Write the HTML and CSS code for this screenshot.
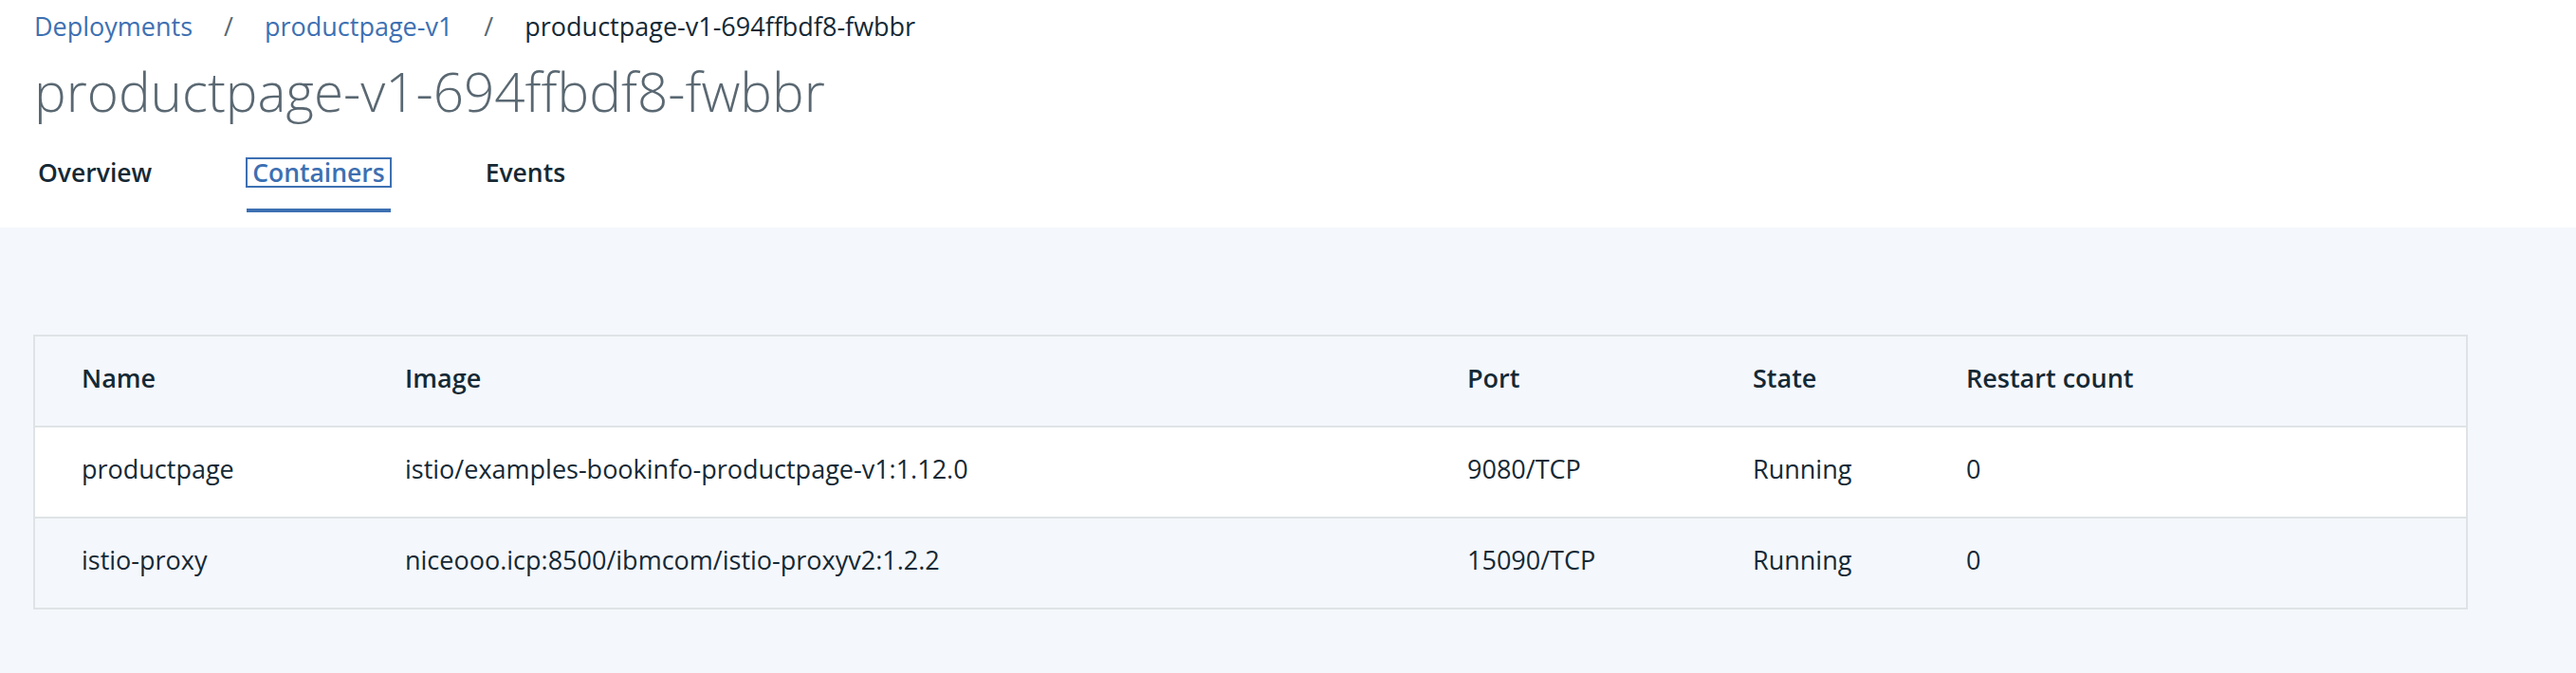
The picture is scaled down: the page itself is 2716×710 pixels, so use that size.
FILE: index.html
```html
<!DOCTYPE html>
<html lang="en">
<head>
<meta charset="utf-8">
<title>productpage-v1-694ffbdf8-fwbbr</title>
<link rel="stylesheet" href="styles.css">
</head>
<body>
<header class="page-header">
  <nav class="breadcrumb">
    <a class="crumb-link" href="#">Deployments</a>
    <span class="crumb-sep">/</span>
    <a class="crumb-link" href="#">productpage-v1</a>
    <span class="crumb-sep">/</span>
    <span class="crumb-current">productpage-v1-694ffbdf8-fwbbr</span>
  </nav>
  <h1 class="page-title">productpage-v1-694ffbdf8-fwbbr</h1>
  <ul class="tabs">
    <li class="tab"><a class="tab-link" href="#">Overview</a></li>
    <li class="tab tab-selected"><a class="tab-link tab-focus" href="#">Containers</a></li>
    <li class="tab"><a class="tab-link" href="#">Events</a></li>
  </ul>
</header>
<main class="content">
  <table class="data-table">
    <colgroup>
      <col class="col-name">
      <col class="col-image">
      <col class="col-port">
      <col class="col-state">
      <col class="col-restart">
    </colgroup>
    <thead>
      <tr class="head-row">
        <th>Name</th>
        <th>Image</th>
        <th>Port</th>
        <th>State</th>
        <th>Restart count</th>
      </tr>
    </thead>
    <tbody>
      <tr class="row-white">
        <td>productpage</td>
        <td>istio/examples-bookinfo-productpage-v1:1.12.0</td>
        <td>9080/TCP</td>
        <td>Running</td>
        <td>0</td>
      </tr>
      <tr class="row-gray">
        <td>istio-proxy</td>
        <td>niceooo.icp:8500/ibmcom/istio-proxyv2:1.2.2</td>
        <td>15090/TCP</td>
        <td>Running</td>
        <td>0</td>
      </tr>
    </tbody>
  </table>
</main>
</body>
</html>
```
FILE: styles.css
```css
html, body {
  margin: 0;
  padding: 0;
}
body {
  background: #f4f7fb;
  font-family: "Open Sans", "Noto Sans", sans-serif;
  color: #152935;
  width: 2716px;
  height: 710px;
  overflow: hidden;
}
.page-header {
  background: #ffffff;
  height: 240px;
  box-sizing: border-box;
  padding: 10px 0 0 36px;
}
.breadcrumb {
  display: flex;
  align-items: baseline;
  gap: 33px;
  font-size: 27px;
  line-height: 36px;
}
.crumb-link {
  color: #3d70b2;
  text-decoration: none;
}
.crumb-sep {
  color: #5a6872;
}
.crumb-current {
  color: #152935;
}
.page-title {
  margin: 19px 0 0 0;
  font-size: 56.6px;
  font-weight: 300;
  line-height: 64px;
  color: #5a6872;
  letter-spacing: 0;
}
.tabs {
  list-style: none;
  margin: 37px 0 0 -3px;
  padding: 0;
  display: flex;
}
.tab {
  position: relative;
  margin-right: 92px;
  padding-bottom: 26px;
}
.tab-link {
  display: block;
  padding: 0 5px;
  border: 2px solid transparent;
  font-size: 26.5px;
  font-weight: 600;
  line-height: 28px;
  color: #152935;
  text-decoration: none;
}
.tab-selected .tab-link {
  color: #3d70b2;
}
.tab-focus {
  border-color: #3d70b2;
}
.tab-selected::after {
  content: "";
  position: absolute;
  left: 1px;
  right: 1px;
  bottom: 0;
  height: 4px;
  background: #3d70b2;
}
.content {
  padding: 113px 114px 0 35px;
}
.data-table {
  width: 100%;
  border-collapse: collapse;
  table-layout: fixed;
  border: 2px solid #dfe3e6;
  font-size: 27px;
}
.col-name { width: 342px; }
.col-image { width: 1120px; }
.col-port { width: 301px; }
.col-state { width: 225px; }
.data-table th,
.data-table td {
  text-align: left;
  padding: 28px 0 34px 49px;
  line-height: 32px;
  white-space: nowrap;
}
.data-table th {
  font-weight: 600;
}
.data-table tr {
  border-bottom: 2px solid #dfe3e6;
}
.head-row {
  background: #f4f7fb;
}
.row-white {
  background: #ffffff;
}
.row-gray {
  background: #f4f7fb;
}
```
